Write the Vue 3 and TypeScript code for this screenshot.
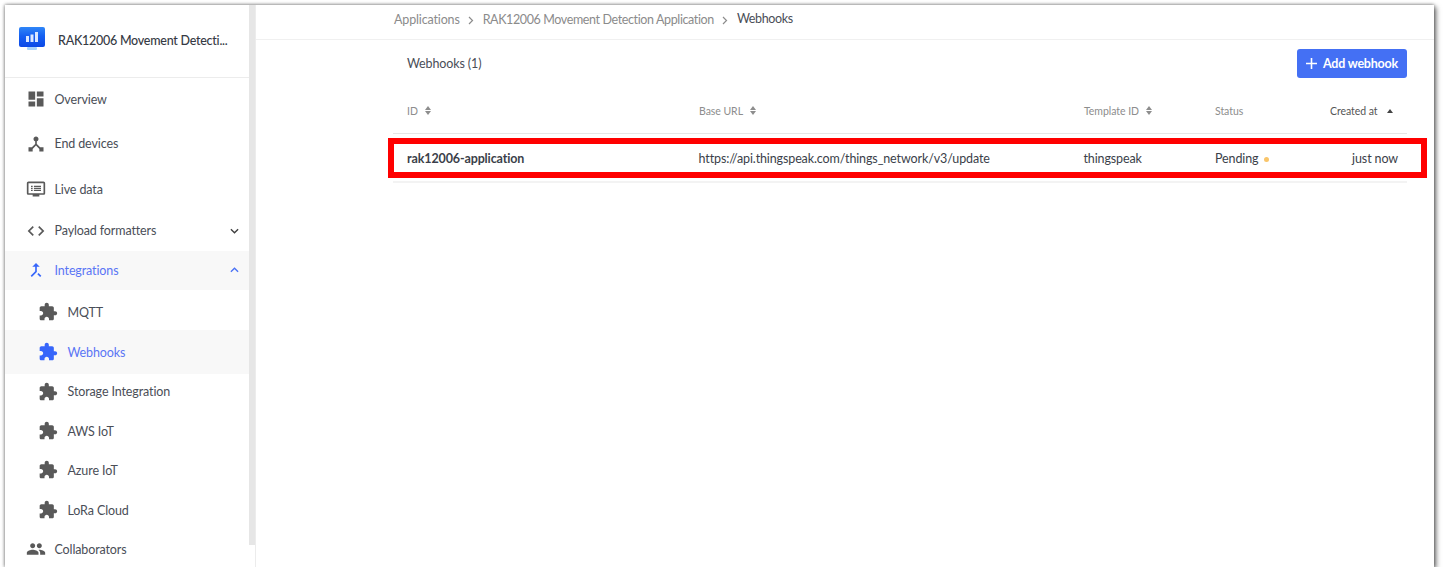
<script setup lang="ts">
const P = {
  dash: 'M3 13h8V3H3v10zm0 8h8v-6H3v6zm10 0h8V11h-8v10zm0-18v6h8V3h-8z',
  hub: 'M17 16l-4-4V8.82C14.16 8.4 15 7.3 15 6c0-1.66-1.34-3-3-3S9 4.34 9 6c0 1.3.84 2.4 2 2.82V12l-4 4H3v5h5v-3.05l4-4.2 4 4.2V21h5v-5h-4z',
  live: 'M21 3H3c-1.1 0-2 .9-2 2v12c0 1.1.9 2 2 2h5v2h8v-2h5c1.1 0 2-.9 2-2V5c0-1.1-.9-2-2-2zm0 14H3V5h18v12zM6 8h2v1.5H6zm3.5 0H18v1.5H9.5zM6 10.5h2V12H6zm3.5 0H18V12H9.5zM6 13h2v1.5H6zm3.5 0H18v1.5H9.5z',
  code: 'M9.4 16.6L4.8 12l4.6-4.6L8 6l-6 6 6 6 1.4-1.4zm5.2 0l4.6-4.6-4.6-4.6L16 6l6 6-6 6-1.4-1.4z',
  merge: 'M17 20.41L18.41 19 15 15.59 13.59 17 17 20.41zM7.5 8H11v5.59L5.59 19 7 20.41l6-6V8h3.5L12 3.5 7.5 8z',
  ext: 'M20.5 11H19V7c0-1.1-.9-2-2-2h-4V3.5C13 2.12 11.88 1 10.5 1S8 2.12 8 3.5V5H4c-1.1 0-1.99.9-1.99 2v3.8H3.5c1.49 0 2.7 1.21 2.7 2.7s-1.21 2.7-2.7 2.7H2V20c0 1.1.9 2 2 2h3.8v-1.5c0-1.49 1.21-2.7 2.7-2.7 1.49 0 2.7 1.21 2.7 2.7V22H17c1.1 0 2-.9 2-2v-4h1.5c1.38 0 2.5-1.12 2.5-2.5S21.88 11 20.5 11z',
  people: 'M16 11c1.66 0 2.99-1.34 2.99-3S17.66 5 16 5c-1.66 0-3 1.34-3 3s1.34 3 3 3zm-8 0c1.66 0 2.99-1.34 2.99-3S9.66 5 8 5C6.34 5 5 6.34 5 8s1.34 3 3 3zm0 2c-2.33 0-7 1.17-7 3.5V19h14v-2.5c0-2.33-4.67-3.5-7-3.5zm8 0c-.29 0-.62.02-.97.05 1.16.84 1.97 1.97 1.97 3.45V19h6v-2.5c0-2.33-4.67-3.5-7-3.5z',
}
interface Item { label: string; icon: string; cls: string; sub?: boolean; active?: boolean; chev?: 'up' | 'down' }
const items: Item[] = [
  { label: 'Overview', icon: P.dash, cls: 'r-over' },
  { label: 'End devices', icon: P.hub, cls: 'r-end' },
  { label: 'Live data', icon: P.live, cls: 'r-live' },
  { label: 'Payload formatters', icon: P.code, cls: 'r-pay', chev: 'down' },
  { label: 'Integrations', icon: P.merge, cls: 'r-int', active: true, chev: 'up' },
  { label: 'MQTT', icon: P.ext, cls: 'r-mqtt', sub: true },
  { label: 'Webhooks', icon: P.ext, cls: 'r-web', sub: true, active: true },
  { label: 'Storage Integration', icon: P.ext, cls: 'r-sto', sub: true },
  { label: 'AWS IoT', icon: P.ext, cls: 'r-aws', sub: true },
  { label: 'Azure IoT', icon: P.ext, cls: 'r-azu', sub: true },
  { label: 'LoRa Cloud', icon: P.ext, cls: 'r-lor', sub: true },
  { label: 'Collaborators', icon: P.people, cls: 'r-col' },
]
</script>

<template>
  <div class="frame">
    <aside class="side">
      <div class="scroll">
        <div class="head">
          <svg class="logo" width="26" height="23" viewBox="0 0 26 23">
            <defs>
              <linearGradient id="scr" x1="0" y1="0" x2="0" y2="1">
                <stop offset="0" stop-color="#2f86f7" />
                <stop offset="0.45" stop-color="#1560f2" />
                <stop offset="1" stop-color="#0c48e6" />
              </linearGradient>
            </defs>
            <rect x="8" y="20" width="10" height="3" rx="1" fill="#a9d3fb" />
            <rect width="26" height="20" rx="2" fill="url(#scr)" />
            <rect x="7" y="9" width="3" height="6" fill="#dbe8ff" />
            <rect x="11.5" y="7.5" width="3" height="7.5" fill="#dbe8ff" />
            <rect x="16" y="5" width="3" height="10" fill="#dbe8ff" />
          </svg>
          <span class="appname">RAK12006 Movement Detecti...</span>
        </div>
        <nav class="menu">
          <div v-for="it in items" :key="it.label" class="row" :class="[it.cls, { sub: it.sub, active: it.active }]">
            <svg class="ico" viewBox="0 0 24 24" width="20" height="20"><path :d="it.icon" /></svg>
            <span class="lbl">{{ it.label }}</span>
            <svg v-if="it.chev" class="chev" viewBox="0 0 10 6" width="9" height="6">
              <path :d="it.chev === 'up' ? 'M1 5l4-4 4 4' : 'M1 1l4 4 4-4'" fill="none" stroke-width="1.5" />
            </svg>
          </div>
        </nav>
      </div>
    </aside>
    <main class="main">
      <div class="crumbs">
        <span>Applications</span>
        <svg class="sep" width="6" height="9" viewBox="0 0 6 9"><path d="M1 1l3.5 3.5L1 8" fill="none" stroke="#8c8c8c" stroke-width="1.2" /></svg>
        <span class="mid">RAK12006 Movement Detection Application</span>
        <svg class="sep" width="6" height="9" viewBox="0 0 6 9"><path d="M1 1l3.5 3.5L1 8" fill="none" stroke="#8c8c8c" stroke-width="1.2" /></svg>
        <span class="cur">Webhooks</span>
      </div>
      <div class="body">
        <div class="toolbar">
          <span class="title">Webhooks (1)</span>
          <button class="add">
            <svg class="plus" width="11" height="11" viewBox="0 0 11 11"><path d="M5.5 0v11M0 5.5h11" stroke="#fff" stroke-width="1.6" /></svg>
            Add webhook
          </button>
        </div>
        <div class="thead grid">
          <span>ID<i class="sort"><b class="u"></b><b class="d"></b></i></span>
          <span>Base URL<i class="sort"><b class="u"></b><b class="d"></b></i></span>
          <span>Template ID<i class="sort"><b class="u"></b><b class="d"></b></i></span>
          <span>Status</span>
          <span class="created">Created at<i class="sort one"><b class="u"></b></i></span>
        </div>
        <div class="trow grid">
          <span class="id">rak12006-application</span>
          <span class="url">https://api.thingspeak.com/things_network/v3/update</span>
          <span class="url">thingspeak</span>
          <span class="status">Pending<i class="dot"></i></span>
          <span class="when">just now</span>
          <div class="mark"></div>
        </div>
      </div>
    </main>
  </div>
</template>

<style>
html, body { margin: 0; background: #fff; }
</style>

<style scoped>
.frame {
  width: 1429px; height: 562px; margin: 5px 0 0 5px; display: flex; overflow: hidden;
  background: #fff; box-shadow: 2px 2px 5px rgba(0,0,0,.6), -1px 0 3px rgba(0,0,0,.2), 0 -1px 3px rgba(0,0,0,.2);
  font-family: Lato, "Noto Sans", sans-serif; font-size: 12.5px; letter-spacing: -.12px; color: #3b3f4a;
}
.side { width: 250px; flex: none; border-right: 1px solid #ececec; }
.scroll { height: 100%; width: 244px; position: relative; }
.scroll::after { content: ""; position: absolute; left: 244px; top: 0; width: 6px; height: 540px; background: #e6e6e6; }
.head { height: 72px; border-bottom: 1px solid #ececec; display: flex; align-items: center; padding-left: 14px; box-sizing: content-box; }
.logo { flex: none; margin: -5px 13px 0 0; }
.appname { font-size: 12.5px; letter-spacing: -.25px; font-weight: 500; color: #363a44; white-space: nowrap; margin-top: -1px; }
.menu { display: block; }
.row { display: flex; align-items: center; padding-left: 21px; padding-right: 10px; color: #4a4e57; box-sizing: border-box; }
.row .ico { flex: none; fill: #595959; margin-right: 8.5px; }
.row.sub { padding-left: 33px; }
.row.sub .ico { margin-right: 9.5px; }
.row.active { background: #f8f8f8; color: #5a75f5; }
.row.active .ico { fill: #3766fa; }
.lbl { flex: 1; white-space: nowrap; }
.chev { stroke: #3f3f3f; }
.active .chev { stroke: #4a72f5; }
.r-over { height: 42px; }
.r-end { height: 48px; padding-bottom: 1px; }
.r-live { height: 42px; }
.r-pay { height: 41px; }
.r-int { height: 39px; padding-bottom: 1px; }
.r-mqtt { height: 40px; padding-top: 4px; }
.r-web { height: 44px; }
.r-sto { height: 36px; padding-bottom: 1px; }
.r-aws { height: 41px; padding-top: 1px; }
.r-azu { height: 39px; padding-bottom: 1px; }
.r-lor { height: 40px; }
.r-col { height: 37px; padding-top: 1px; }
.main { flex: 1; min-width: 0; }
.crumbs { border-bottom: 1px solid #f0f0f0; display: flex; align-items: center; padding: 0 0 6px 138px; box-sizing: content-box; height: 28px; color: #8b8b8b; font-size: 12.5px; letter-spacing: -.15px; }
.mid { letter-spacing: -.38px; }
.sep { margin: 2px 8.5px 0; }
.cur { color: #4a4e57; margin: -1px 0 0 0; letter-spacing: -.35px; }
.body { padding: 9px 27px 0 137px; }
.toolbar { height: 29px; display: flex; align-items: center; justify-content: space-between; padding-left: 14px; color: #4a4e57; }
.title { margin-top: -1px; }
.add { width: 110px; height: 29px; border: 0; border-radius: 3px; background: #4470f4; color: #fff; font: 700 12.5px Lato, sans-serif; letter-spacing: -.2px; display: flex; align-items: center; justify-content: center; padding: 0; }
.plus { margin-right: 6px; }
.grid { display: grid; grid-template-columns: 292px 385px 131px 115px 1fr; align-items: center; }
.grid > span { padding-left: 14px; white-space: nowrap; }
.thead { height: 56px; padding-top: 10px; border-bottom: 1px solid #e6e6e6; font-size: 10.5px; letter-spacing: -.05px; color: #8d8d8d; box-sizing: border-box; }
.thead > span { display: flex; align-items: center; }
.created { color: #555; }
.sort { display: flex; flex-direction: column; gap: 1px; margin-left: 7px; }
.sort.one { margin-left: 9px; }
.sort b { display: block; width: 0; height: 0; border-left: 3.5px solid transparent; border-right: 3.5px solid transparent; }
.sort .u { border-bottom: 4px solid #8d8d8d; }
.sort .d { border-top: 4px solid #8d8d8d; }
.sort.one .u { border-bottom-color: #444; }
.trow { position: relative; height: 49px; padding-top: 1px; border-bottom: 2px solid #f3f3f3; box-sizing: border-box; color: #3b3f4a; }
.grid > .url { margin-left: -.5px; }
.id { font-weight: 700; }
.dot { display: inline-block; width: 5px; height: 5px; border-radius: 50%; background: #f9c56a; margin-left: 6px; vertical-align: 1px; }
.grid > .when { padding: 0 9px 0 0; text-align: right; }
.mark { position: absolute; left: -5px; right: -20px; top: 4px; height: 40px; border: 6px solid #f00; box-sizing: border-box; pointer-events: none; }
</style>
